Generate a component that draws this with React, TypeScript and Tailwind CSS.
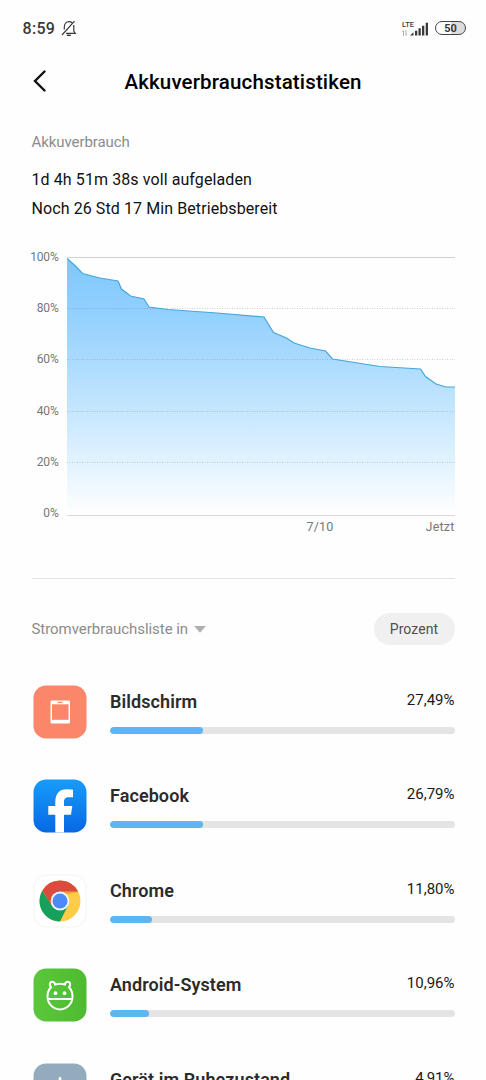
const apps = [
  { name: "Bildschirm", value: "27,49%", width: 93, icon: <ScreenIcon /> },
  { name: "Facebook", value: "26,79%", width: 93, icon: <FacebookIcon /> },
  { name: "Chrome", value: "11,80%", width: 41.5, icon: <ChromeIcon /> },
  { name: "Android-System", value: "10,96%", width: 38.5, icon: <AndroidIcon /> },
  { name: "Gerät im Ruhezustand", value: "4,91%", width: 17, icon: <IdleIcon /> },
]

const levels = ["100%", "80%", "60%", "40%", "20%", "0%"]

const line =
  "0,1.5 9,9.5 15.5,16.5 33,21 51,24 54.500,32 63.500,39 77,42 82,50 101,52.500 150,56 197,60 206.500,75.500 219.500,81 227,86 243,91 258.500,94 265.500,102 313,109.500 353.500,112 358.500,119.500 369,127 379,130 388,130"

function ScreenIcon() {
  return (
    <svg viewBox="0 0 54 54" className="size-full">
      <rect x="0.5" y="0.500" width="53" height="53" rx="12.500" fill="#fb8669" />
      <rect x="17.500" y="15.500" width="19.500" height="23" rx="1.200" fill="#fff" />
      <rect x="19" y="19.300" width="16.500" height="15.500" fill="#fb8669" />
      <rect x="24.700" y="16.800" width="5" height="1.300" fill="#fb8669" />
    </svg>
  )
}

function FacebookIcon() {
  return (
    <svg viewBox="0 0 54 54" className="size-full">
      <defs>
        <linearGradient id="fb" x1="0" y1="0" x2="0" y2="1">
          <stop offset="0" stopColor="#179cfa" />
          <stop offset="1" stopColor="#0768e4" />
        </linearGradient>
      </defs>
      <rect x="0.500" y="0.500" width="53" height="53" rx="12.500" fill="url(#fb)" />
      <path
        d="M22.300 53.500V35.800h-7V27h7v-4.200c0-8.200 4.200-12.600 11.200-12.600 2.500 0 4.800.2 6.500.5v7.500h-4c-3.700 0-5 1.700-5 4.800v4h8.300l-1.300 8.800h-7v17.700z"
        fill="#fff"
      />
    </svg>
  )
}

function ChromeIcon() {
  return (
    <svg viewBox="0 0 54 54" className="size-full">
      <rect x="1" y="1" width="52" height="52" rx="12.500" fill="#fff" stroke="#f4f4f4" />
      <circle cx="27" cy="27" r="20.500" fill="#fecd45" />
      <path d="M9.250 16.750A20.500 20.500 0 0 0 27 47.500L35 31.600L27 27L19 31.600z" fill="#16a05e" />
      <path d="M9.250 16.750A20.500 20.500 0 0 1 45.200 17.700H27L18.500 31z" fill="#db4a3d" />
      <path d="M27 17.700H45.200L34 20.500z" fill="#e8a93a" />
      <circle cx="27" cy="27" r="9.400" fill="#f3f4f2" />
      <circle cx="27" cy="27" r="7.500" fill="#4c8bf5" />
    </svg>
  )
}

function AndroidIcon() {
  return (
    <svg viewBox="0 0 54 54" className="size-full" fill="none" stroke="#fff" strokeWidth="2">
      <defs>
        <linearGradient id="sys" x1="0" y1="0" x2="1" y2="0">
          <stop offset="0" stopColor="#5ac73c" />
          <stop offset="1" stopColor="#4dba31" />
        </linearGradient>
      </defs>
      <rect x="0.500" y="0.500" width="53" height="53" rx="12.500" fill="url(#sys)" stroke="none" />
      <path d="M18 19.300c-2.300-2.800-.9-5.500 1.200-5.500 1.700 0 2.600 1 2.900 2.700 3-1 6.400-1 9.800 0 .3-1.700 1.200-2.700 2.900-2.700 2.100 0 3.500 2.700 1.200 5.500 2.200 2.300 3.500 5.400 3.500 9.100 0 7.200-5.600 13-12.500 13s-12.500-5.800-12.500-13c0-3.700 1.300-6.800 3.500-9.100z" />
      <path d="M14.800 31h24.400" />
      <circle cx="22.500" cy="25.200" r="1.900" fill="#fff" stroke="none" />
      <circle cx="31.500" cy="25.200" r="1.900" fill="#fff" stroke="none" />
    </svg>
  )
}

function IdleIcon() {
  return (
    <svg viewBox="0 0 54 54" className="size-full">
      <rect x="0.500" y="0.500" width="53" height="53" rx="12.500" fill="#92abbd" />
      <path d="M27 15.500v13M21.500 18.500a10.500 10.500 0 1 0 11 0" fill="none" stroke="#fff" strokeWidth="2.800" strokeLinecap="round" />
    </svg>
  )
}

const StatusBar = () => (
  <div className="flex h-14 items-center justify-between pt-px pr-5 pl-[22.500px] text-[#3a3a3a]">
    <div className="flex items-center gap-[6px]">
      <span className="text-[16px] leading-5 font-medium tracking-[0.3px]">8:59</span>
      <svg width="16" height="17" viewBox="0 0 16 17" fill="none" stroke="currentColor" strokeWidth="1.200" className="-mt-px">
        <path d="M3.300 9.500V7.300c0-3.500 2-5.600 4.800-5.600 1.300 0 2.300.4 3 1M12.800 5v6l1.500 2.300H5M1 15 13.500 1.200M2 13.300h1" />
        <path d="M5.800 15.300h4" strokeWidth="1.500" />
      </svg>
    </div>
    <div className="-mt-px flex items-center gap-[6px]">
      <div className="flex items-end">
        <div className="flex h-[15px] w-[13px] flex-col items-start">
          <span className="text-[7.500px] leading-[8px] font-medium">LTE</span>
          <svg width="6" height="6" viewBox="0 0 6 6" fill="none" stroke="#999" strokeWidth="0.800" className="mt-px">
            <path d="M1.500 6V.8L.3 2M4 0v5.200L5.200 4" />
          </svg>
        </div>
        <svg width="19" height="14" viewBox="0 0 19 14" fill="currentColor" className="-ml-[5px]">
          <path d="M0 13.500 3.500 10.200v3.300zM5 8.700h2.300v4.800H5zM8.500 6.200h2.300v7.300H8.500zM12 3.700h2.300v9.800H12zM15.700.8H18v12.700h-2.300z" />
        </svg>
      </div>
      <div className="flex h-[14px] w-[31px] items-center justify-center rounded-full border-[1.500px] border-[#444] bg-[linear-gradient(90deg,#fff_50%,#ddd_50%)] text-[11px] leading-none font-bold">
        <span className="pt-px">50</span>
      </div>
    </div>
  </div>
)

const Chart = () => (
  <div className="mt-[26px] flex">
    <div className="flex h-[272px] w-[35px] shrink-0 flex-col justify-between pr-2 text-right text-[12px] leading-4 tracking-[-0.2px] text-[#777]">
      {levels.map((item) => (
        <span key={item} className="flex justify-end">{item}</span>
      ))}
    </div>
    <div className="flex-1">
      <svg width="388" height="267" viewBox="0 -8 388 267" className="block">
        <defs>
          <linearGradient id="area" x1="0" y1="0" x2="0" y2="259" gradientUnits="userSpaceOnUse">
            <stop offset="0" stopColor="#7cc7fd" />
            <stop offset="0.250" stopColor="#96d2fe" />
            <stop offset="0.600" stopColor="#c6e7fe" />
            <stop offset="1" stopColor="#fff" />
          </linearGradient>
        </defs>
        <path d="M0 .5H388" stroke="#d0d0d0" />
        <polygon points={`${line} 388,259 0,259`} fill="url(#area)" />
        {[51.5, 102.5, 154.5, 205.5].map((y) => (
          <path key={y} d={`M0 ${y}H388`} stroke="#5b7d95" strokeOpacity="0.350" strokeDasharray="1 1.500" />
        ))}
        <polyline points={line} fill="none" stroke="#45a6de" strokeWidth="1.200" />
        <path d="M0 258.500H388" stroke="#d5d9dc" />
      </svg>
      <div className="mt-[3px] flex justify-between pl-[240px] text-[12.500px] leading-4 tracking-[0.2px] text-[#777]">
        <span>7/10</span>
        <span>Jetzt</span>
      </div>
    </div>
  </div>
)

export default function App() {
  return (
    <div className="h-[1080px] w-full overflow-hidden bg-[#fefefe] font-['Roboto',sans-serif] text-black">
      <StatusBar />
      <header className="grid h-[52px] grid-cols-[92px_1fr_92px] items-center">
        <svg width="14" height="22" viewBox="0 0 14 22" fill="none" stroke="#111" strokeWidth="2.400" strokeLinecap="round" className="-mt-[2px] ml-[33px]">
          <path d="M11.500 1.500 2 11l9.500 9.500" />
        </svg>
        <h1 className="text-center text-[20.500px] leading-7 font-medium tracking-[0.150px] whitespace-nowrap">Akkuverbrauchstatistiken</h1>
      </header>
      <main className="pr-[31.500px] pl-[31.500px]">
        <h2 className="pt-6 text-[15px] leading-5 tracking-[-0.080px] text-[#8c8c8c]">Akkuverbrauch</h2>
        <div className="mt-[13px] text-[16px] leading-[29px] tracking-[0.090px] text-[#111]">
          <p>1d 4h 51m 38s voll aufgeladen</p>
          <p>Noch 26 Std 17 Min Betriebsbereit</p>
        </div>
        <Chart />
        <div className="mt-[43px] border-t border-[#e4e4e4]" />
        <div className="mt-[33px] flex h-[34px] items-center justify-between">
          <span className="flex items-center gap-[6px] text-[15px] tracking-[-0.050px] text-[#8c8c8c]">
            Stromverbrauchsliste in
            <svg width="12" height="7" viewBox="0 0 12 7" fill="#b0b0b0">
              <path d="M0 0h12L6 6.800z" />
            </svg>
          </span>
          <button className="h-8 w-[81px] rounded-full bg-[#f0f0f0] text-[14px] tracking-[0.080px] text-[#505050]">Prozent</button>
        </div>
        <div className="mt-[38.600px]">
          {apps.map((item) => (
            <div key={item.name} className="flex h-[94.600px] items-start">
              <div className="ml-px size-[54px] shrink-0">{item.icon}</div>
              <div className="ml-[23.500px] flex-1">
                <div className="flex items-start justify-between pt-[5px]">
                  <span className="text-[18px] leading-6 font-semibold tracking-[0.080px] text-[#2b2b2b]">{item.name}</span>
                  <span className="text-[15px] leading-5 text-[#1a1a1a]">{item.value}</span>
                </div>
                <div className="mt-[13px] h-[7px] overflow-hidden rounded-full bg-[#e4e4e4]">
                  <div className="h-full rounded-full bg-[#5db5f3]" style={{ width: item.width }} />
                </div>
              </div>
            </div>
          ))}
        </div>
      </main>
    </div>
  )
}
